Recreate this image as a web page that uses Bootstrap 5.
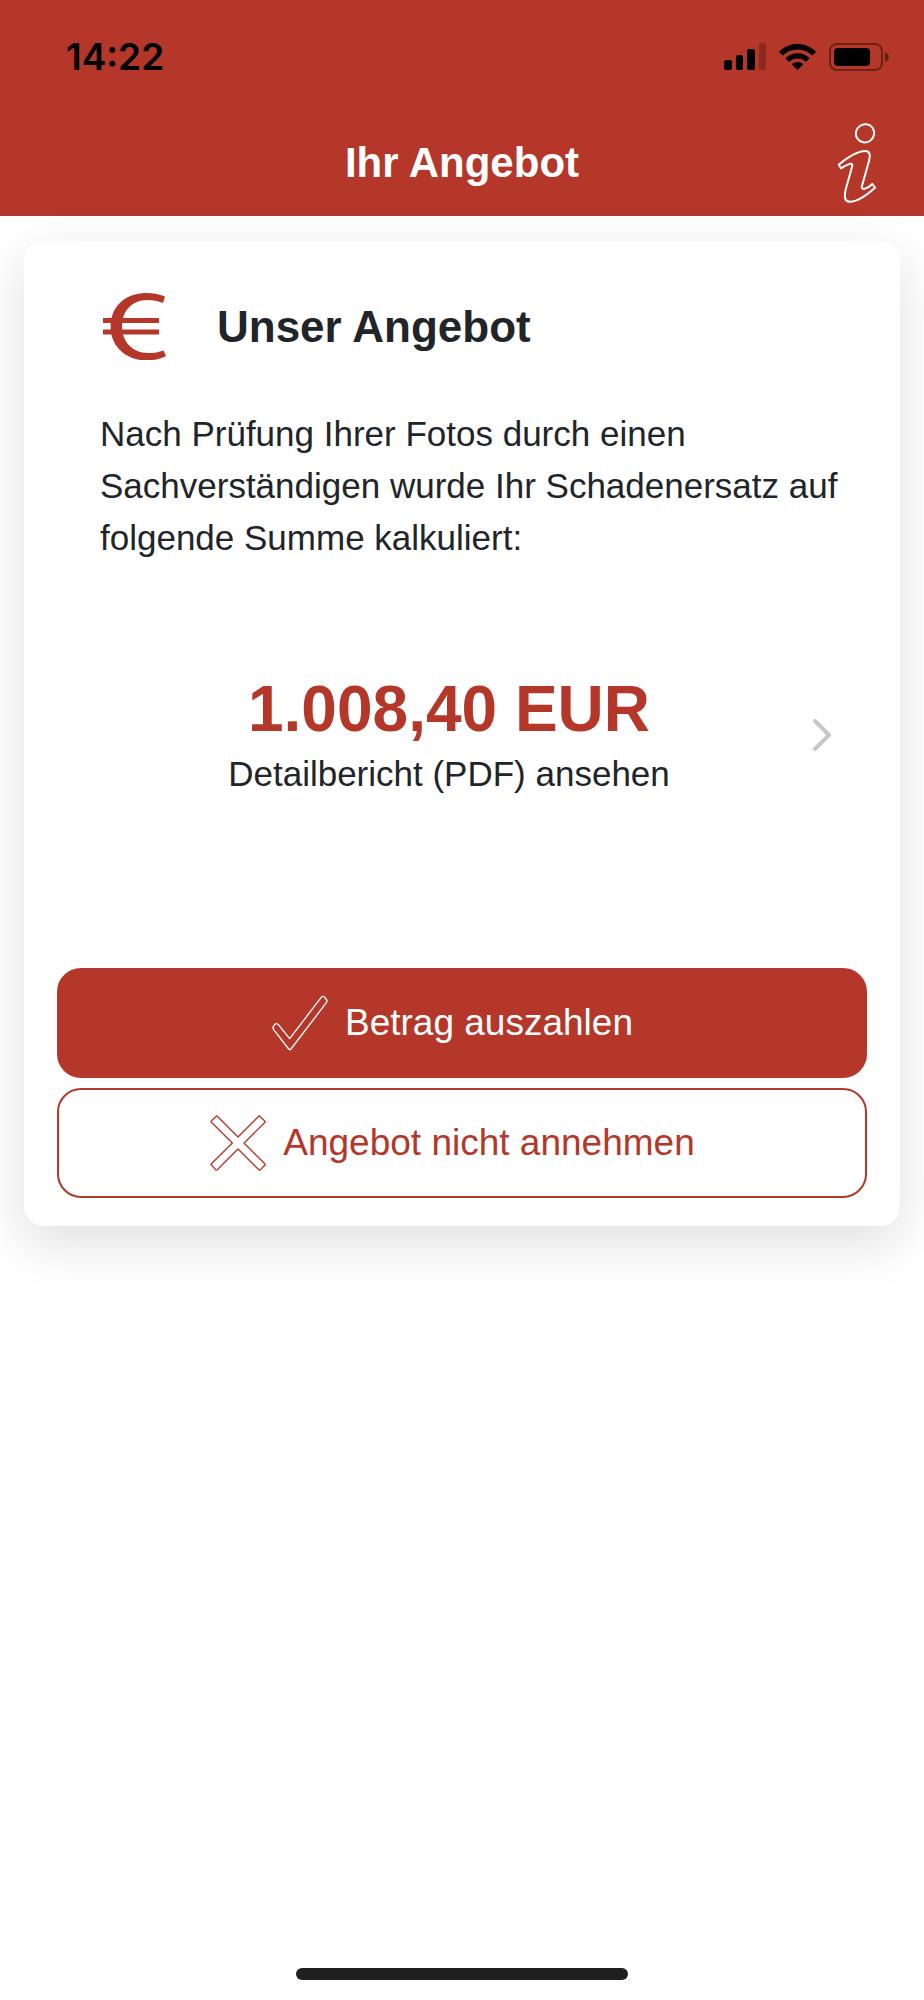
<!DOCTYPE html>
<html lang="de">
<head>
<meta charset="utf-8">
<meta name="viewport" content="width=device-width, initial-scale=1">
<title>Ihr Angebot</title>
<link rel="stylesheet" href="https://cdn.jsdelivr.net/npm/bootstrap@5.3.0/dist/css/bootstrap.min.css">
<style>
  :root { --brand: #b43729; --ink: #212529; }
  body { font-family: "Liberation Sans", Arial, sans-serif; font-size: 35px; line-height: 52px; color: var(--ink); background: #fff; }
  svg { display: block; flex: none; }
  .app-header { background: var(--brand); }
  .status-bar { height: 114px; padding: 0 34px 0 66px; }
  .clock { font-family: Inter, sans-serif; font-weight: 600; font-size: 37px; color: #000; }
  .title-bar { display: grid; grid-template-columns: 1fr auto 1fr; height: 102px; padding: 0 46px 4px; }
  .title-bar h1 { grid-column: 2; font-size: 42px; line-height: 52px; font-weight: 700; }
  .offer-card { margin: 25px 24px 0; padding: 52px 33px 28px; border: 0; border-radius: 20px; box-shadow: 0 17px 52px rgba(0,0,0,.13); }
  .offer-head { padding-left: 46px; gap: 50px; }
  .offer-head h2 { font-size: 44px; line-height: 52px; font-weight: 700; }
  .offer-text { padding: 0 20px 0 43px; margin-top: 47px; }
  .report-link { margin: 106px 33px 168px 43px; color: var(--ink); }
  .amount { font-size: 64px; line-height: 78px; font-weight: 700; color: var(--brand); }
  .offer-btn { --bs-btn-font-size: 37px; --bs-btn-line-height: 52px; --bs-btn-border-radius: 24px; --bs-btn-border-width: 2px;
    --bs-btn-color: var(--brand); --bs-btn-border-color: var(--brand); --bs-btn-bg: #fff;
    --bs-btn-hover-color: #fff; --bs-btn-hover-bg: #9c2e22; --bs-btn-hover-border-color: #9c2e22; height: 110px; gap: 16px; padding: 0 32px 0 12px; }
  .offer-btn-main { --bs-btn-color: #fff; --bs-btn-bg: var(--brand); }
  .btn-stack { gap: 10px; }
  .home-bar { width: 36%; height: 12px; background: #1f1f1f; margin-bottom: 20px; }
</style>
<script src="https://cdn.jsdelivr.net/npm/bootstrap@5.3.0/dist/js/bootstrap.bundle.min.js"></script>
</head>
<body>
<div class="min-vh-100 d-flex flex-column">
  <header class="app-header text-white">
    <div class="status-bar d-flex align-items-center justify-content-between">
      <span class="clock">14:22</span>
      <svg width="166" height="28" viewBox="0 0 166 28" role="img" aria-label="Mobilfunk, WLAN, Akku">
        <rect x="0" y="17" width="8" height="10" rx="2"/>
        <rect x="12" y="12" width="7" height="15" rx="2"/>
        <rect x="23" y="6" width="8" height="21" rx="2"/>
        <rect x="35" y="0" width="7" height="27" rx="2" fill-opacity=".22"/>
        <path d="M73.500 27l-5.800-5.800c3.200-3.100 8.400-3.100 11.600 0zM61.400 15.200c6.600-6.600 17.600-6.600 24.200 0l-3.700 3.700c-4.700-4.500-12.100-4.500-16.800 0zM54.900 8.700c10.200-10.400 27-10.400 37.200 0l-3.800 3.700c-8.200-8-21.400-8-29.600 0z"/>
        <rect x="106" y="1" width="52" height="26" rx="7" fill="none" stroke="#000" stroke-opacity=".4" stroke-width="2"/>
        <rect x="110" y="5" width="36" height="18" rx="4"/>
        <path d="M161 9c5 2 5 8 0 10z" fill-opacity=".45"/>
      </svg>
    </div>
    <div class="title-bar align-items-center">
      <h1 class="m-0">Ihr Angebot</h1>
      <a href="#info" class="ms-auto" aria-label="Information">
        <svg width="42" height="84" viewBox="408 302 126 252" fill="none" stroke="#fff" stroke-width="6" stroke-linejoin="round">
          <ellipse cx="495" cy="339" rx="28" ry="27" transform="rotate(-35 495 339)"/>
          <path d="M416 433C438 415 474 391 498 392C513 394 510 410 507 422L485 500C485 512 506 502 517 491L525 502C506 519 474 544 450 544C430 544 433 522 438 504L456 440C460 425 450 428 423 444Z"/>
        </svg>
      </a>
    </div>
  </header>

  <main class="card offer-card">
    <div class="offer-head d-flex align-items-center">
      <svg width="64" height="68" viewBox="0 0 64 68" fill="#b43729" aria-hidden="true">
        <path d="M62 3.500L60 10C55 8 50 7 44.500 7C29 7 19 18 19 33.500C19 49 30 60 45 60C51 60 56 59 60.500 57.400L63 63C59 65 55 66.500 50 67H37C20 64 7.600 52 7.600 33.500C7.600 14 22 0 43 0C50 0 56 1 62 3.500Z"/>
        <path d="M0 25h56v5H0zM0 36.500h56v5H0z"/>
      </svg>
      <h2 class="m-0">Unser Angebot</h2>
    </div>
    <p class="offer-text mb-0">Nach Prüfung Ihrer Fotos durch einen Sachverständigen wurde Ihr Schadenersatz auf folgende Summe kalkuliert:</p>
    <a href="#bericht" class="report-link d-flex align-items-center text-decoration-none text-center">
      <span class="flex-grow-1">
        <strong class="amount d-block">1.008,40 EUR</strong>
        <span class="d-block">Detailbericht (PDF) ansehen</span>
      </span>
      <svg width="36" height="36" viewBox="-12 0 36 36" fill="none" stroke="#c7c7c7" stroke-width="4" stroke-linecap="round" stroke-linejoin="round" aria-hidden="true"><path d="M5 4l14 14L5 32"/></svg>
    </a>
    <div class="btn-stack d-grid">
      <button type="button" class="btn offer-btn offer-btn-main d-flex align-items-center justify-content-center">
        <svg width="58" height="58" viewBox="694 134 174 174" fill="none" stroke="currentColor" stroke-width="4" stroke-linejoin="round" aria-hidden="true"><path d="M750 268L844 145Q849 138 854 143L859 149Q864 155 860 160L754 299Q751 303 747 299L702 241Q698 235 702 230L706 225Q711 220 716 226Z"/></svg>
        Betrag auszahlen
      </button>
      <button type="button" class="btn offer-btn d-flex align-items-center justify-content-center">
        <svg width="58" height="58" viewBox="509 490 174 174" fill="none" stroke="currentColor" stroke-width="4" stroke-linejoin="round" aria-hidden="true"><path d="M533 496L596 559L659 496Q661 496 663 498L677 512Q678 514 677 515L614 577L677 640Q678 642 677 643L663 657Q661 659 659 658L596 595L533 658Q531 659 529 657L516 643Q514 641 516 639L579 577L516 515Q514 513 516 511L529 498Q531 496 533 496Z"/></svg>
        Angebot nicht annehmen
      </button>
    </div>
  </main>

  <div class="home-bar rounded-pill mt-auto mx-auto"></div>
</div>
</body>
</html>
